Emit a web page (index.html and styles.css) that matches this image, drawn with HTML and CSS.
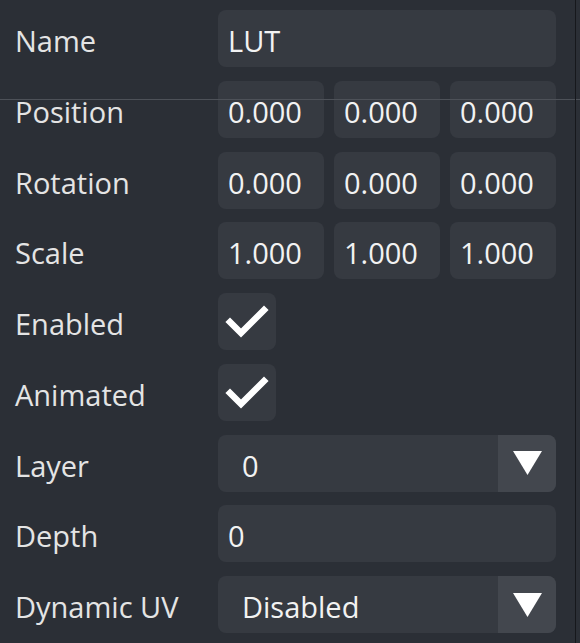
FILE: index.html
```html
<!DOCTYPE html>
<html>
<head>
<meta charset="utf-8">
<link rel="stylesheet" href="styles.css">
</head>
<body>
<div class="panel">
  <div class="label">Name</div>
  <div class="field text">LUT</div>

  <div class="label">Position</div>
  <div class="triple">
    <div class="field text">0.000</div>
    <div class="field text">0.000</div>
    <div class="field text">0.000</div>
  </div>

  <div class="label">Rotation</div>
  <div class="triple">
    <div class="field text">0.000</div>
    <div class="field text">0.000</div>
    <div class="field text">0.000</div>
  </div>

  <div class="label">Scale</div>
  <div class="triple">
    <div class="field text">1.000</div>
    <div class="field text">1.000</div>
    <div class="field text">1.000</div>
  </div>

  <div class="label">Enabled</div>
  <div class="check">
    <svg width="58" height="57" viewBox="0 0 58 57"><polyline points="12,29 23,40 46,17" fill="none" stroke="#ffffff" stroke-width="6.5" stroke-linecap="square" stroke-linejoin="miter"/></svg>
  </div>

  <div class="label">Animated</div>
  <div class="check">
    <svg width="58" height="57" viewBox="0 0 58 57"><polyline points="12,29 23,40 46,17" fill="none" stroke="#ffffff" stroke-width="6.5" stroke-linecap="square" stroke-linejoin="miter"/></svg>
  </div>

  <div class="label">Layer</div>
  <div class="select">
    <span class="select-value">0</span>
    <span class="select-arrow"><svg width="29" height="24" viewBox="0 0 29 24"><polygon points="0,0 29,0 14.5,24" fill="#ffffff"/></svg></span>
  </div>

  <div class="label">Depth</div>
  <div class="field text">0</div>

  <div class="label">Dynamic UV</div>
  <div class="select">
    <span class="select-value">Disabled</span>
    <span class="select-arrow"><svg width="29" height="24" viewBox="0 0 29 24"><polygon points="0,0 29,0 14.5,24" fill="#ffffff"/></svg></span>
  </div>
</div>
<div class="hline"></div>
<div class="vline"></div>
</body>
</html>
```

FILE: styles.css
```css
html, body {
  margin: 0;
  padding: 0;
  background: #2b2f36;
  width: 580px;
  height: 643px;
  overflow: hidden;
}

body {
  position: relative;
  font-family: "Open Sans", "Noto Sans", sans-serif;
  font-size: 29px;
  color: #e9e9e9;
}

.panel {
  display: grid;
  grid-template-columns: 203px 338px;
  grid-auto-rows: 57px;
  row-gap: 13.75px;
  padding: 10px 0 0 15px;
}

.label {
  display: flex;
  align-items: center;
  padding-top: 4px;
  color: #e4e4e4;
}

.field {
  background: #363a41;
  border-radius: 8px;
  display: flex;
  align-items: center;
  padding-left: 10px;
  padding-top: 4px;
  color: #f2f2f2;
}

.triple {
  display: grid;
  grid-template-columns: 1fr 1fr 1fr;
  column-gap: 10px;
}

.check {
  width: 58px;
  height: 57px;
  background: #363a41;
  border-radius: 8px;
}

.check svg {
  display: block;
}

.select {
  display: flex;
  background: #363a41;
  border-radius: 8px;
  overflow: hidden;
}

.select-value {
  flex: 1;
  display: flex;
  align-items: center;
  padding-left: 24px;
  padding-top: 4px;
  color: #f2f2f2;
}

.select-arrow {
  width: 58px;
  background: #43474e;
  display: flex;
  align-items: center;
  justify-content: center;
}

.select-arrow svg {
  display: block;
}

.hline {
  position: absolute;
  left: 0;
  top: 99px;
  width: 580px;
  height: 1px;
  background: #4d5158;
}

.vline {
  position: absolute;
  left: 575px;
  top: 0;
  width: 1px;
  height: 643px;
  background: #16181c;
}
```
